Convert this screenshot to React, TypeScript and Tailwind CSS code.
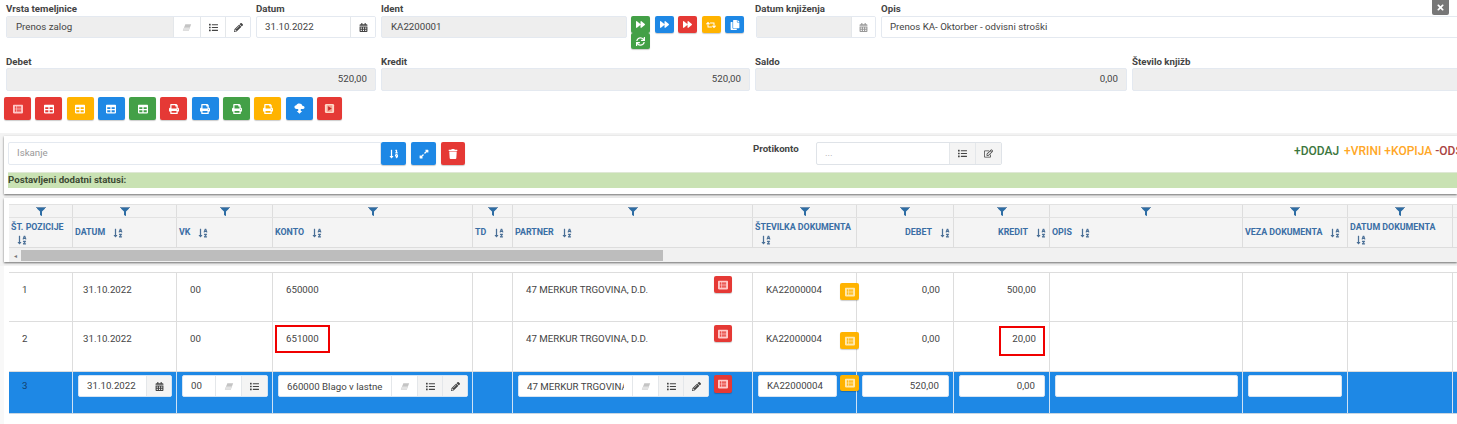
import type { ReactNode } from "react";
import {
  FaCalendarAlt,
  FaCopy,
  FaExpandAlt,
  FaFilter,
  FaForward,
  FaList,
  FaListAlt,
  FaPencilAlt,
  FaPrint,
  FaRegEdit,
  FaRetweet,
  FaSortAlphaDown,
  FaSortNumericDown,
  FaSync,
  FaTable,
  FaTimes,
  FaTrash,
} from "react-icons/fa";

const cols =
  "grid grid-cols-[64px_104px_96px_200px_40px_240px_104px_97px_96px_193px_105px_105px_100px]";

const red = "bg-[#e53935]";
const blue = "bg-[#1e88e5]";
const green = "bg-[#43a047]";
const amber = "bg-[#ffb300]";

function Label({ children }: { children: ReactNode }) {
  return <div className="h-[16px] pt-[3px] text-[9.7px] leading-[12px] font-bold text-[#444]">{children}</div>;
}

function Btn({ color, w = "w-[27px]", h = "h-[23px]", children }: { color: string; w?: string; h?: string; children: ReactNode }) {
  return (
    <div className={`${color} ${w} ${h} flex shrink-0 items-center justify-center rounded-[2px] text-[10px] text-white shadow-[0_1px_1px_rgba(0,0,0,0.2)]`}>
      {children}
    </div>
  );
}

function Addon({ w, gray, dark, children }: { w: string; gray?: boolean; dark?: boolean; children: ReactNode }) {
  return (
    <div className={`${w} ${gray ? "bg-[#f4f4f4]" : "bg-white"} ${dark ? "text-[#444]" : "text-[#999]"} flex h-full shrink-0 items-center justify-center border-l border-[#e4e7ea] text-[9px]`}>
      {children}
    </div>
  );
}

function ReadOnly({ className, right, children }: { className: string; right?: boolean; children?: ReactNode }) {
  return (
    <div className={`${className} ${right ? "justify-end pr-[8px]" : "pl-[9px]"} flex shrink-0 items-center rounded-[2px] border border-[#e4e9f0] bg-[#eeeeee] text-[9.7px] text-[#444]`}>
      {children}
    </div>
  );
}

function Eraser() {
  return (
    <svg viewBox="0 0 12 10" className="h-[9px] w-[10px]">
      <polygon points="4,1 11,1 8,9 1,9" fill="#c4c4c4" />
      <polygon points="2.6,5 9.6,5 8,9 1,9" fill="#e2e2e2" />
    </svg>
  );
}

function CloudArrow() {
  return (
    <svg viewBox="0 0 12 12" className="h-[11px] w-[11px]" fill="white">
      <path d="M3 6.5C1.4 6.5.5 5.5.5 4.3.5 3.2 1.4 2.4 2.5 2.4 3 1.200 4.300.5 5.700.5c1.700 0 3 1 3.400 2.400 1.400 0 2.400.8 2.400 1.900 0 1-.9 1.700-2.100 1.700z" />
      <path d="M4.600 6.500h2.800v2.300h1.600L6 11.800 3 8.800h1.600z" />
    </svg>
  );
}

function PlayDoc() {
  return (
    <svg viewBox="0 0 12 12" className="h-[11px] w-[11px]">
      <rect x="1" y="1" width="10" height="10" rx="1.500" fill="#ffd9c9" />
      <rect x="3" y="2.500" width="6" height="7" fill="#f2a08e" />
      <polygon points="4.500,3.500 8.500,6 4.500,8.500" fill="#c62828" />
    </svg>
  );
}

function HeadCell({ title, right, wrap }: { title: string; right?: boolean; wrap?: boolean }) {
  return (
    <div className={`${right ? "justify-end" : ""} ${wrap ? "flex-col items-start justify-center" : "items-center"} flex gap-x-[8px] overflow-hidden border-r border-[#dddddd] pr-[3px] pl-[2px] text-[8.85px] leading-[13px] font-bold text-[#3a6ea5]`}>
      <span className="whitespace-nowrap">{title}</span>
      <FaSortAlphaDown className={`${wrap ? "mt-[1px] ml-[6px]" : ""} shrink-0 text-[10px] text-[#4a6f96]`} />
    </div>
  );
}

function FilterCell() {
  return (
    <div className="flex h-[12px] items-center justify-center border-r border-[#dddddd]">
      <div className="flex flex-col items-center">
        <div className="h-[1px] w-[10px] bg-[#6f8fb0]" />
        <FaFilter className="text-[8px] text-[#2e6da4]" />
      </div>
    </div>
  );
}

function Cell({ right, children }: { right?: boolean; children?: ReactNode }) {
  return (
    <div className={`${right ? "justify-end pr-[13px]" : ""} flex min-w-0 border-r border-[#dddddd] text-[9.7px] text-[#444]`}>
      {children}
    </div>
  );
}

function Row({ n, konto, kredit }: { n: string; konto: string; kredit: string }) {
  return (
    <div className={`${cols} ${n === "1" ? "h-[49px]" : "h-[50px]"} border-b border-[#dddddd]`}>
      <Cell><span className="mt-[10px] ml-[13px]">{n}</span></Cell>
      <Cell><span className="mt-[10px] ml-[10px]">31.10.2022</span></Cell>
      <Cell><span className="mt-[10px] ml-[13px]">00</span></Cell>
      <Cell><span className="mt-[10px] ml-[13px]">{konto}</span></Cell>
      <Cell />
      <Cell>
        <span className="mt-[10px] ml-[13px]">47 MERKUR TRGOVINA, D.D.</span>
        <div className="mt-[3px] mr-[20px] ml-auto">
          <Btn color={red} w="w-[18px]" h="h-[17px]"><FaListAlt className="text-[#ffc9c9]" /></Btn>
        </div>
      </Cell>
      <Cell>
        <span className="mt-[10px] ml-[13px]">KA22000004</span>
        <div className="mt-[10px] mr-[-3px] ml-auto">
          <Btn color={amber} w="w-[19px]" h="h-[17px]"><FaListAlt className="text-[#ffe9b0]" /></Btn>
        </div>
      </Cell>
      <Cell right><span className="mt-[10px]">0,00</span></Cell>
      <Cell right><span className="mt-[10px]">{kredit}</span></Cell>
      <Cell />
      <Cell />
      <Cell />
      <div />
    </div>
  );
}

function EditBox({ w, children, right }: { w: string; children?: ReactNode; right?: boolean }) {
  return (
    <div className={`${w} ${right ? "justify-end pr-[9px]" : ""} mt-[3px] flex h-[22px] shrink-0 items-center overflow-hidden rounded-[2px] border border-[#d6e4f3] bg-white text-[9.7px] text-[#444]`}>
      {children}
    </div>
  );
}

function EditCell({ children }: { children?: ReactNode }) {
  return <div className="flex min-w-0 gap-[2px] border-r border-[#cfe2f5] pl-[5px]">{children}</div>;
}

export default function App() {
  return (
    <div className="relative h-[424px] w-[1457px] overflow-hidden bg-white font-['Roboto',sans-serif] text-[#444]">
      {/* glava temeljnice */}
      <div className="flex h-[16px] pl-[6px]">
        <div className="w-[250px] shrink-0"><Label>Vrsta temeljnice</Label></div>
        <div className="w-[125px] shrink-0"><Label>Datum</Label></div>
        <div className="w-[374px] shrink-0"><Label>Ident</Label></div>
        <div className="w-[126px] shrink-0"><Label>Datum knjiženja</Label></div>
        <div className="shrink-0"><Label>Opis</Label></div>
      </div>
      <div className="flex h-[22px] pl-[6px]">
        <div className="flex h-full w-[245px] shrink-0 overflow-hidden rounded-[2px] border border-[#e4e9f0]">
          <div className="flex flex-1 items-center bg-[#eeeeee] pl-[9px] text-[9.7px]">Prenos zalog</div>
          <Addon w="w-[27px]"><Eraser /></Addon>
          <Addon w="w-[25px]" dark><FaList /></Addon>
          <Addon w="w-[25px]" dark><FaPencilAlt /></Addon>
        </div>
        <div className="ml-[5px] flex h-full w-[120px] shrink-0 overflow-hidden rounded-[2px] border border-[#e4e9f0]">
          <div className="flex flex-1 items-center pl-[8px] text-[9.7px]">31.10.2022</div>
          <Addon w="w-[25px]" dark><FaCalendarAlt /></Addon>
        </div>
        <ReadOnly className="ml-[5px] w-[246px]">KA2200001</ReadOnly>
        <div className="ml-[4px] flex w-[120px] shrink-0 flex-wrap content-start gap-x-[4.500px] text-[9px]">
          <Btn color={green} w="w-[19px]" h="h-[17px]"><FaForward className="text-[9px]" /></Btn>
          <Btn color={blue} w="w-[19px]" h="h-[17px]"><FaForward className="text-[9px]" /></Btn>
          <Btn color={red} w="w-[19px]" h="h-[17px]"><FaForward className="text-[9px]" /></Btn>
          <Btn color={amber} w="w-[19px]" h="h-[17px]"><FaRetweet /></Btn>
          <Btn color={blue} w="w-[19px]" h="h-[17px]"><FaCopy /></Btn>
          <Btn color={green} w="w-[19px]" h="h-[16px]"><FaSync className="text-[9px]" /></Btn>
        </div>
        <div className="ml-[5px] flex h-full w-[120px] shrink-0 overflow-hidden rounded-[2px] border border-[#e4e9f0]">
          <div className="flex-1 bg-[#eeeeee]" />
          <Addon w="w-[24px]"><FaCalendarAlt /></Addon>
        </div>
        <div className="ml-[5px] flex h-full w-[590px] shrink-0 items-center rounded-[2px] border border-[#e4e9f0] pl-[8px] text-[9.7px]">
          Prenos KA- Oktorber - odvisni stroški
        </div>
      </div>

      <div className="mt-[15px] flex h-[15px] pl-[6px]">
        <div className="w-[375px] shrink-0"><Label>Debet</Label></div>
        <div className="w-[374px] shrink-0"><Label>Kredit</Label></div>
        <div className="w-[377px] shrink-0"><Label>Saldo</Label></div>
        <div className="shrink-0"><Label>Število knjižb</Label></div>
      </div>
      <div className="flex h-[23px] gap-[5px] pl-[6px]">
        <ReadOnly className="w-[370px]" right>520,00</ReadOnly>
        <ReadOnly className="w-[369px]" right>520,00</ReadOnly>
        <ReadOnly className="w-[372px]" right>0,00</ReadOnly>
        <ReadOnly className="w-[340px]" />
      </div>

      <div className="mt-[6px] flex h-[23px] gap-[4.300px] pl-[4px]">
        <Btn color={red}><FaListAlt className="text-[#ffc9c9]" /></Btn>
        <Btn color={red}><FaTable /></Btn>
        <Btn color={amber}><FaTable /></Btn>
        <Btn color={blue}><FaTable /></Btn>
        <Btn color={green}><FaTable /></Btn>
        <Btn color={red}><FaPrint /></Btn>
        <Btn color={blue}><FaPrint /></Btn>
        <Btn color={green}><FaPrint /></Btn>
        <Btn color={amber}><FaPrint /></Btn>
        <Btn color={blue}><CloudArrow /></Btn>
        <Btn color={red} w="w-[25px]"><PlayDoc /></Btn>
      </div>

      {/* iskanje */}
      <div className="mt-[13px] h-[65px] bg-[#f3f3f3] pt-[3px]">
        <div className="ml-[4px] h-[58px] overflow-hidden bg-white pt-[6px] pl-[4px] shadow-[0_1px_2px_rgba(0,0,0,0.55)]">
          <div className="flex h-[23px] items-start">
            <div className="flex h-full w-[373px] shrink-0 items-center rounded-l-[2px] border border-[#e4e9f0] pl-[8px] text-[9.7px] text-[#999]">Iskanje</div>
            <Btn color={blue} w="w-[25px]"><FaSortNumericDown /></Btn>
            <div className="ml-[5px]"><Btn color={blue} w="w-[25px]"><FaExpandAlt /></Btn></div>
            <div className="ml-[5px]"><Btn color={red} w="w-[24px]"><FaTrash /></Btn></div>
            <div className="ml-[288px] w-[63px] shrink-0 text-[9.7px] font-bold">Protikonto</div>
            <div className="flex h-full w-[186px] shrink-0 overflow-hidden rounded-[2px] border border-[#dfe3e8]">
              <div className="flex flex-1 items-center pl-[8px] text-[9.7px] text-[#aaa]">...</div>
              <Addon w="w-[26px]" gray dark><FaList /></Addon>
              <Addon w="w-[26px]" gray dark><FaRegEdit /></Addon>
            </div>
            <div className="ml-[292px] shrink-0 whitespace-nowrap text-[12px] font-medium">
              <span className="mr-[2px] text-[#3c763d]">+DODAJ</span>{" "}
              <span className="text-[#ffa726]">+VRINI</span>{" "}
              <span className="text-[#ffa726]">+KOPIJA</span>{" "}
              <span className="text-[#a94442]">-ODSTRANI</span>
            </div>
          </div>
          <div className="mt-[7px] flex h-[16px] items-center border-t border-[#dfe8d5] bg-[#c9e2b3] text-[9.7px] font-bold text-[#3d4a33]">
            Postavljeni dodatni statusi:
          </div>
        </div>
      </div>

      {/* glava tabele */}
      <div className="bg-[#f3f3f3] pb-[4px]">
        <div className="ml-[4px] h-[64px] overflow-hidden bg-white pt-[6px] pl-[5px] shadow-[0_1px_2px_rgba(0,0,0,0.55)]">
          <div className="bg-[#f4f4f4]">
            <div className={`${cols} border-t border-b border-[#e2e2e2]`}>
              {Array.from({ length: 12 }, (_, i) => <FilterCell key={i} />)}
            </div>
            <div className={`${cols} h-[30px] border-b border-[#dddddd]`}>
              <HeadCell title="ŠT. POZICIJE" wrap />
              <HeadCell title="DATUM" />
              <HeadCell title="VK" />
              <HeadCell title="KONTO" />
              <HeadCell title="TD" />
              <HeadCell title="PARTNER" />
              <HeadCell title="ŠTEVILKA DOKUMENTA" wrap />
              <HeadCell title="DEBET" right />
              <HeadCell title="KREDIT" right />
              <HeadCell title="OPIS" />
              <HeadCell title="VEZA DOKUMENTA" />
              <HeadCell title="DATUM DOKUMENTA" wrap />
            </div>
            <div className="flex h-[14px] items-start bg-[#f1f1f1] pt-[2px]">
              <div className="flex h-[11px] w-[12px] items-center justify-center text-[6px] text-[#777]">◂</div>
              <div className="h-[11px] w-[642px] bg-[#bdbdbd]" />
            </div>
          </div>
        </div>
      </div>

      {/* vrstice */}
      <div className="h-[158px] bg-[#f8f8f8] pl-[4px]">
        <div className="h-full bg-white pt-[6px] pl-[5px]">
          <div className="border-t border-[#dddddd]">
            <Row n="1" konto="650000" kredit="500,00" />
            <Row n="2" konto="651000" kredit="20,00" />
            <div className={`${cols} h-[42px] border-b border-[#c9d6e2] bg-[#1e88e5]`}>
              <div className="border-r border-[#cfe2f5] pt-[7px] pl-[13px] text-[9.7px] text-[#12406e]">3</div>
              <EditCell>
                <EditBox w="w-[94px]">
                  <span className="flex-1 pl-[8px]">31.10.2022</span>
                  <Addon w="w-[25px]" gray dark><FaCalendarAlt /></Addon>
                </EditBox>
              </EditCell>
              <EditCell>
                <EditBox w="w-[86px]">
                  <span className="flex-1 pl-[8px]">00</span>
                  <Addon w="w-[26px]"><Eraser /></Addon>
                  <Addon w="w-[26px]" gray dark><FaList /></Addon>
                </EditBox>
              </EditCell>
              <EditCell>
                <EditBox w="w-[190px]">
                  <span className="mr-auto ml-[8px] w-[96px] overflow-hidden leading-[15px] whitespace-nowrap">660000 Blago v lastne</span>
                  <Addon w="w-[26px]"><Eraser /></Addon>
                  <Addon w="w-[25px]" gray dark><FaList /></Addon>
                  <Addon w="w-[25px]" gray dark><FaPencilAlt /></Addon>
                </EditBox>
              </EditCell>
              <div className="border-r border-[#cfe2f5]" />
              <EditCell>
                <EditBox w="w-[191px]">
                  <span className="mr-auto ml-[8px] w-[97px] overflow-hidden leading-[15px] whitespace-nowrap">47 MERKUR TRGOVINA</span>
                  <Addon w="w-[26px]"><Eraser /></Addon>
                  <Addon w="w-[25px]" gray dark><FaList /></Addon>
                  <Addon w="w-[25px]" gray dark><FaPencilAlt /></Addon>
                </EditBox>
                <div className="mt-[3px] ml-[3px]">
                  <Btn color={red} w="w-[18px]" h="h-[18px]"><FaListAlt className="text-[#ffc9c9]" /></Btn>
                </div>
              </EditCell>
              <EditCell>
                <EditBox w="w-[79px]"><span className="pl-[8px]">KA22000004</span></EditBox>
                <div className="mt-[3px] ml-[1px]">
                  <Btn color={amber} w="w-[19px]" h="h-[16px]"><FaListAlt className="text-[#ffe9b0]" /></Btn>
                </div>
              </EditCell>
              <EditCell><EditBox w="w-[87px]" right>520,00</EditBox></EditCell>
              <EditCell><EditBox w="w-[86px]" right>0,00</EditBox></EditCell>
              <EditCell><EditBox w="w-[183px]" /></EditCell>
              <EditCell><EditBox w="w-[94px]" /></EditCell>
              <div className="border-r border-[#cfe2f5]" />
              <div />
            </div>
          </div>
        </div>
      </div>

      {/* zapri */}
      <div className="absolute top-0 left-[1432px] flex h-[15px] w-[17px] items-center justify-center rounded-b-[2px] bg-[#777] text-[9px] text-white">
        <FaTimes />
      </div>

      {/* oznake na sliki */}
      <div className="absolute top-[325px] left-[275px] h-[28px] w-[55px] border-2 border-[#f00000]" />
      <div className="absolute top-[326px] left-[999px] h-[30px] w-[46px] border-2 border-[#f00000]" />
    </div>
  );
}
